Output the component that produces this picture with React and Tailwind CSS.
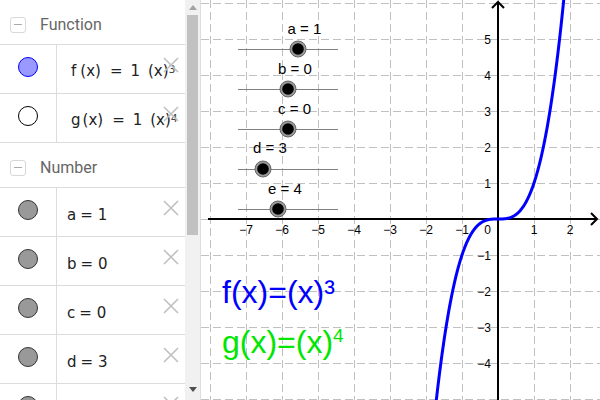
import React from "react";

const GX = 498;
const GY = 219;
const U = 36;

const vLines = [];
for (let k = -8; k <= 2; k++) vLines.push(GX + U * k);
const hLines = [];
for (let k = -5; k <= 6; k++) hLines.push(GY - U * k);

let curve = "";
for (let t = -1.72; t <= 1.84; t += 0.01) {
  const px = GX + U * t;
  const py = GY - U * t * t * t;
  curve += (curve ? " L " : "M ") + px.toFixed(2) + " " + py.toFixed(2);
}

const xLabels = [-7, -6, -5, -4, -3, -2, -1, 1, 2];
const yLabels = [5, 4, 3, 2, 1, -1, -2, -3, -4];

const sliders = [
  { label: "a = 1", lx: 304.5, ly: 34, y: 49, px: 298 },
  { label: "b = 0", lx: 295, ly: 74, y: 89, px: 288 },
  { label: "c = 0", lx: 294.5, ly: 114, y: 129, px: 288 },
  { label: "d = 3", lx: 270, ly: 153, y: 169, px: 263 },
  { label: "e = 4", lx: 285, ly: 194, y: 209, px: 278 },
];

function XIcon() {
  return (
    <svg width="16" height="16" viewBox="0 0 16 16" className="absolute left-[106px] top-[12px]">
      <path d="M1 1 L15 15 M15 1 L1 15" stroke="#c0c0c0" strokeWidth="1.6" fill="none" />
    </svg>
  );
}

function Header({ title }) {
  return (
    <div className="h-[45px] shrink-0 border-b border-[#dcdcdc] flex items-center pt-[5px] box-border">
      <div className="ml-[10px] w-4 h-4 border border-[#d8d8d8] rounded-[3px] flex items-center justify-center">
        <div className="w-[8px] h-[1.5px] bg-[#aaaaaa]" />
      </div>
      <span className="ml-[14px] text-[16px] text-[#666666] font-['Roboto',sans-serif] leading-none">{title}</span>
    </div>
  );
}

function Row({ circle, children, num }) {
  return (
    <div className="h-[49px] shrink-0 border-b border-[#dcdcdc] flex box-border">
      <div className="w-[57px] shrink-0 border-r border-[#dcdcdc] flex items-center justify-center pb-[4px]">
        {circle}
      </div>
      <div className="relative flex-1">
        <div
          className={
            (num ? "pl-[10px] pt-[20px] " : "pl-[14px] pt-[19px] ") +
            "text-[15px] text-[#222] font-['DejaVu_Sans',sans-serif] leading-none whitespace-nowrap"
          }
        >
          {children}
        </div>
        <XIcon />
      </div>
    </div>
  );
}

const grayCircle = <div className="w-5 h-5 rounded-full bg-[#999999] border border-[#333333]" />;

function NumText({ n, v }) {
  return (
    <>
      <span>{n}</span>
      <span className="ml-[4px]">=</span>
      <span className="ml-[5px]">{v}</span>
    </>
  );
}

export default function App() {
  return (
    <div className="w-[600px] h-[400px] flex overflow-hidden bg-white">
      <div className="w-[201px] shrink-0 flex border-r border-[#dddddd]">
        <div className="w-[185px] shrink-0 flex flex-col overflow-hidden">
          <Header title="Function" />
          <Row circle={<div className="w-5 h-5 rounded-full bg-[#9999ff] border border-[#0000ff]" />}>
            <span>f</span>
            <span className="ml-[4px]">(x)</span>
            <span className="ml-[9px]">=</span>
            <span className="ml-[8px]">1</span>
            <span className="ml-[8px]">(x)</span>
            <sup className="text-[11px] text-[#444] relative top-[-3px]">3</sup>
          </Row>
          <Row circle={<div className="w-5 h-5 rounded-full bg-white border border-black" />}>
            <span>g</span>
            <span className="ml-[2px]">(x)</span>
            <span className="ml-[9px]">=</span>
            <span className="ml-[8px]">1</span>
            <span className="ml-[8px]">(x)</span>
            <sup className="text-[11px] text-[#444] relative top-[-3px]">4</sup>
          </Row>
          <Header title="Number" />
          <Row circle={grayCircle} num>
            <NumText n="a" v="1" />
          </Row>
          <Row circle={grayCircle} num>
            <NumText n="b" v="0" />
          </Row>
          <Row circle={grayCircle} num>
            <NumText n="c" v="0" />
          </Row>
          <Row circle={grayCircle} num>
            <NumText n="d" v="3" />
          </Row>
          <Row circle={grayCircle} num>
            <NumText n="e" v="4" />
          </Row>
        </div>
        <div className="w-[15px] shrink-0 bg-[#f1f1f1] flex flex-col items-center">
          <div className="h-[15px] w-full flex items-center justify-center">
            <svg width="8" height="5" viewBox="0 0 8 5">
              <path d="M0 5 L4 0 L8 5 Z" fill="#a3a3a3" />
            </svg>
          </div>
          <div className="w-[11px] h-[220px] bg-[#c1c1c1]" />
          <div className="flex-1" />
          <div className="h-[18px] w-full flex items-start justify-center pt-[5px]">
            <svg width="8" height="5" viewBox="0 0 8 5">
              <path d="M0 0 L8 0 L4 5 Z" fill="#505050" />
            </svg>
          </div>
        </div>
      </div>
      <svg
        width="399"
        height="400"
        viewBox="201 0 399 400"
        className="shrink-0 font-['Liberation_Sans',Arial,sans-serif]"
      >
        <g stroke="#c0c0c0" strokeWidth="1" strokeDasharray="8 4">
          {vLines.map((x) => (
            <line key={"v" + x} x1={x + 0.5} y1="0" x2={x + 0.5} y2="400" />
          ))}
          {hLines.map((y) => (
            <line key={"h" + y} x1="201" y1={y + 0.5} x2="600" y2={y + 0.5} />
          ))}
        </g>
        <g stroke="#000" strokeWidth="2" fill="none">
          <line x1="208" y1={GY} x2="597" y2={GY} />
          <path d="M591 213 L597 219 L591 225" />
          <line x1={GX} y1="400" x2={GX} y2="2" />
          <path d="M492 8 L498 2 L504 8" />
        </g>
        <g fontSize="12" fill="#000">
          {xLabels.map((v) => (
            <text key={"x" + v} x={GX + U * v} y="234" textAnchor="middle">
              {v < 0 ? "\u2212" + -v : v}
            </text>
          ))}
          <text x="491" y="234" textAnchor="end">0</text>
          {yLabels.map((v) => (
            <text key={"y" + v} x="491" y={GY - U * v + 4.5} textAnchor="end">
              {v < 0 ? "\u2212" + -v : v}
            </text>
          ))}
        </g>
        {sliders.map((s) => (
          <g key={s.label}>
            <line x1="238" y1={s.y + 0.5} x2="338" y2={s.y + 0.5} stroke="#808080" strokeWidth="1" />
            <text x={s.lx} y={s.ly} fontSize="15" textAnchor="middle" fill="#000">
              {s.label}
            </text>
            <circle cx={s.px} cy={s.y} r="8" fill="#9a9a9a" stroke="#666" strokeWidth="1" />
            <circle cx={s.px} cy={s.y} r="5.8" fill="#000" />
          </g>
        ))}
        <path d={curve} stroke="#0000ff" strokeWidth="3" fill="none" strokeLinejoin="round" />
        <text x="222" y="303" fontSize="32" fill="#0000ff">f(x)=(x)³</text>
        <text x="222" y="353" fontSize="32" fill="#00e600">
          g(x)=(x)<tspan fontSize="19" dy="-11">4</tspan>
        </text>
      </svg>
    </div>
  );
}
